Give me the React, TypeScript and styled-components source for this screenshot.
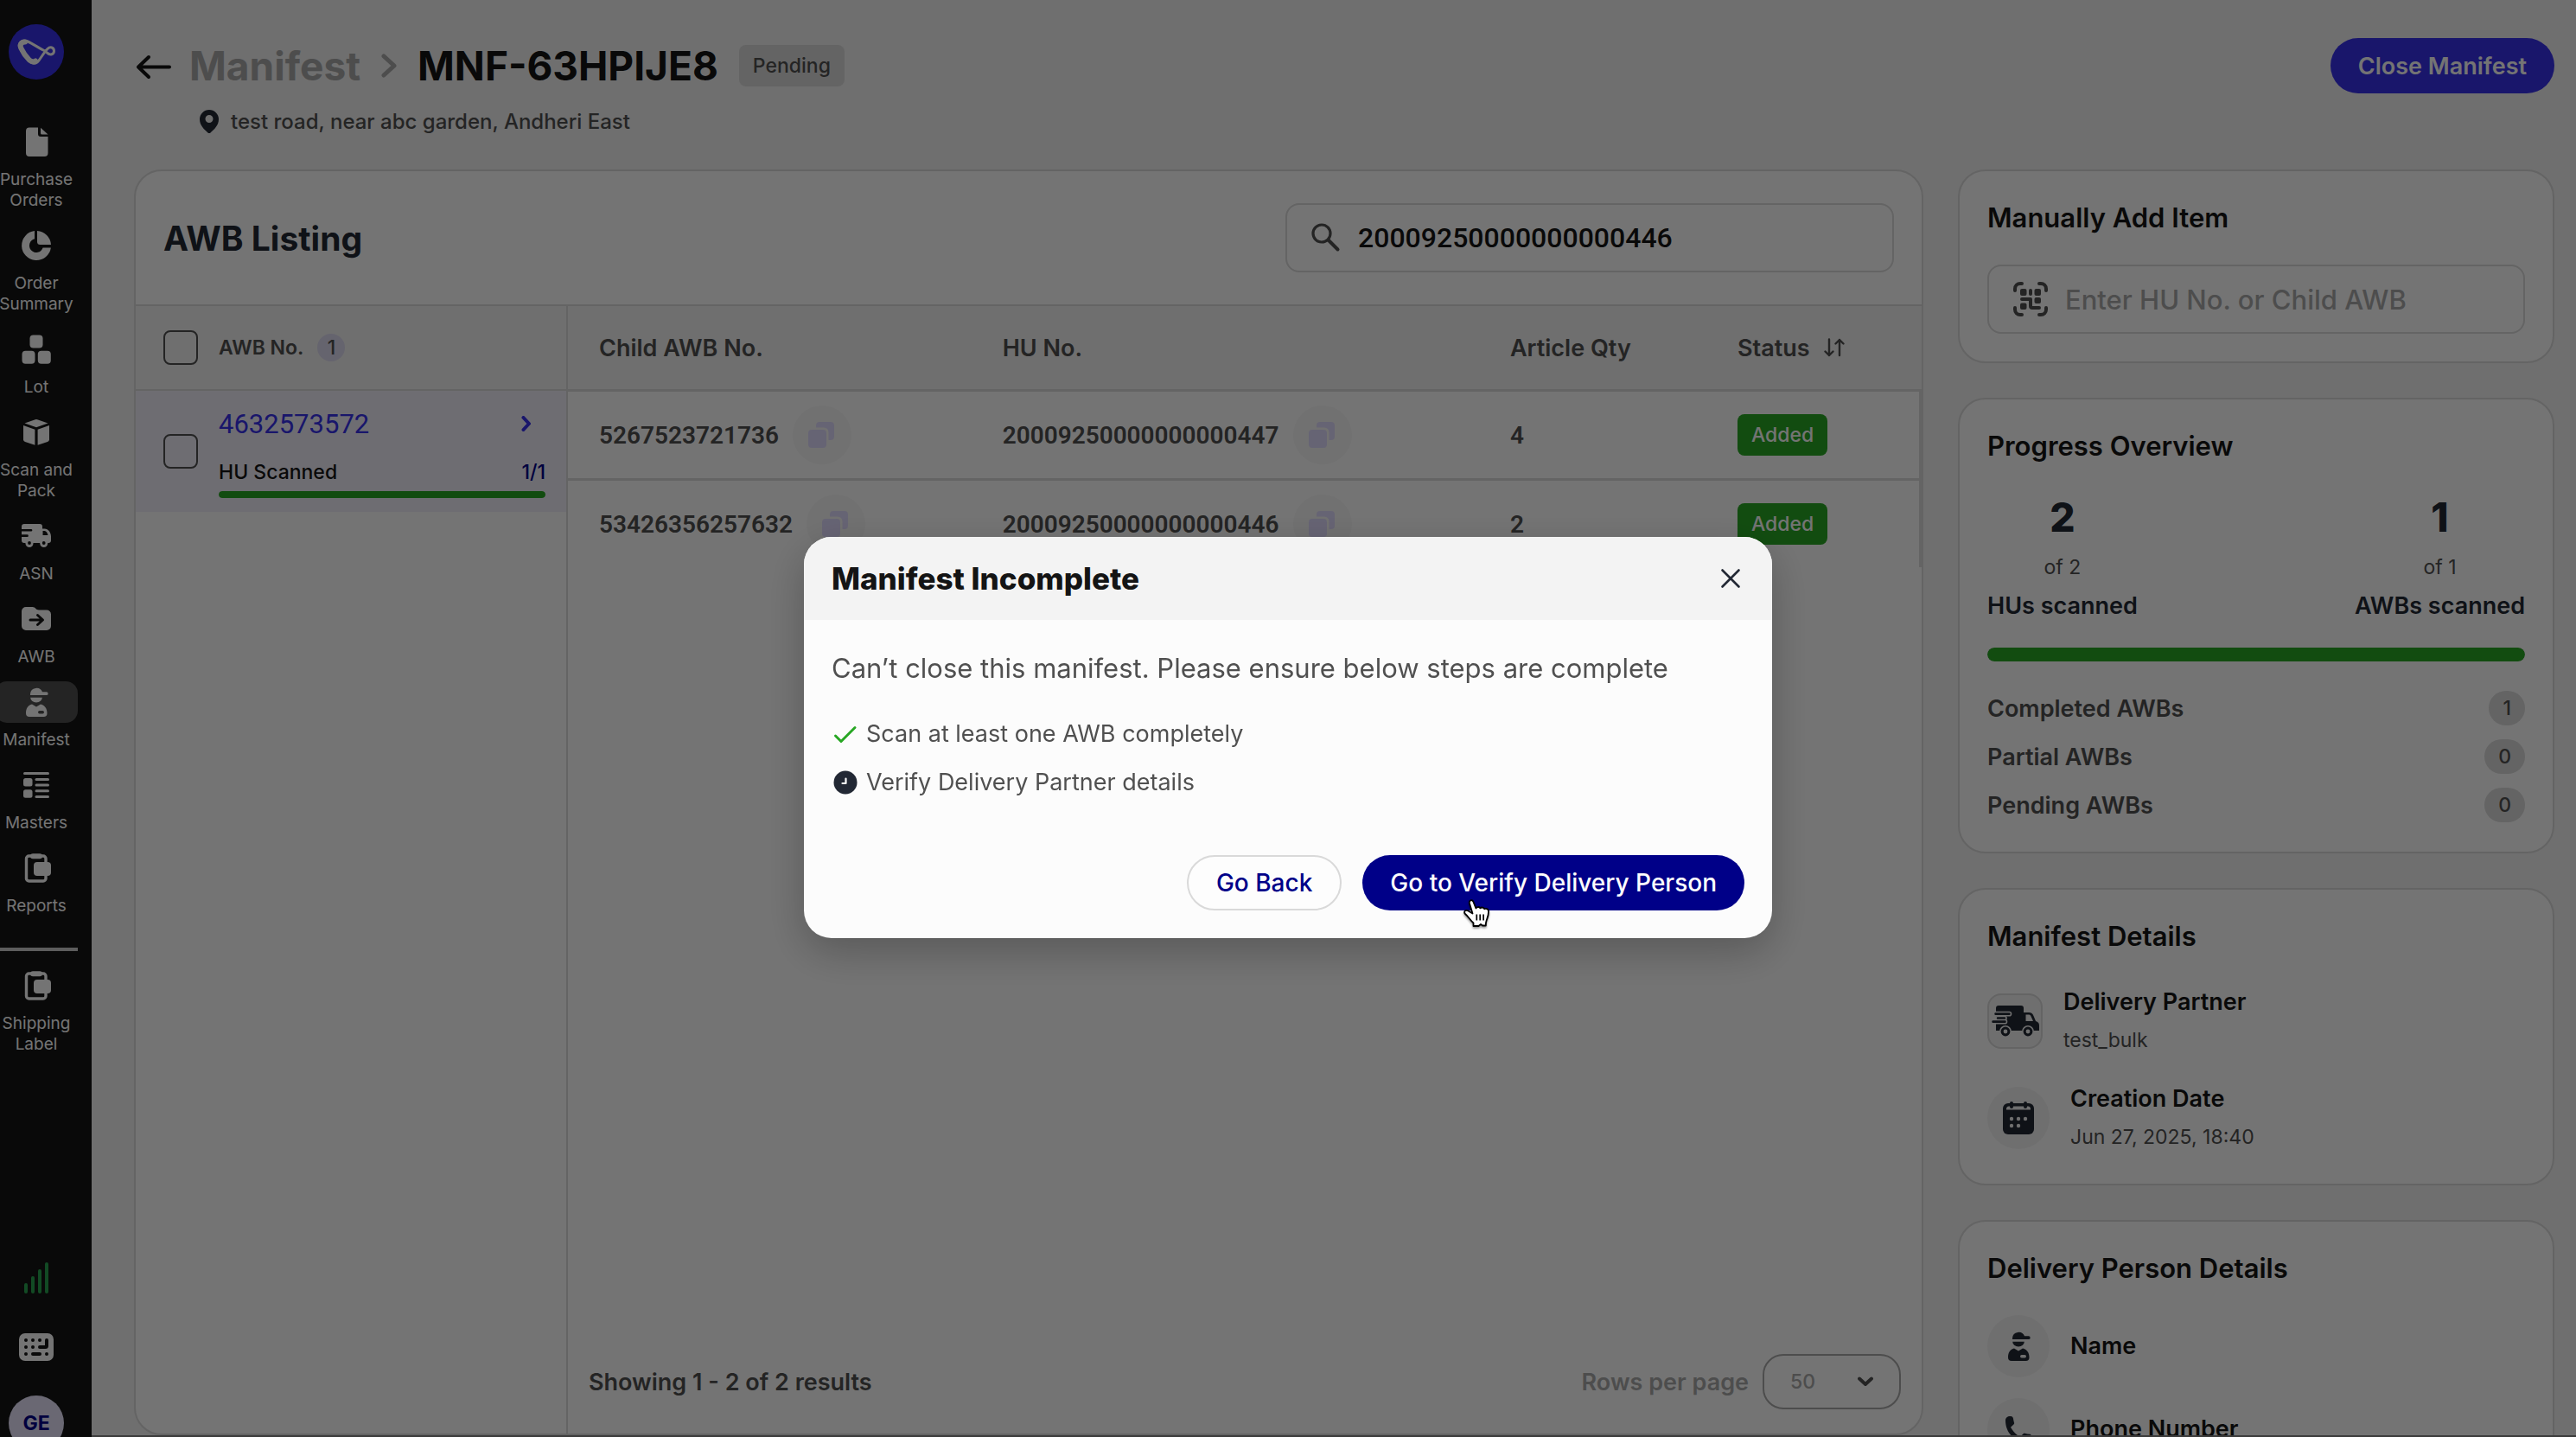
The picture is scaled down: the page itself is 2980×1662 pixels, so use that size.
import React from "react";
import styled, { createGlobalStyle } from "styled-components";

const c = {
  ink: "#141414",
  navy: "#222834",
  text: "#4f4f4f",
  muted: "#a8a8a8",
  line: "#d9d9d9",
  page: "#f1f1f1",
  card: "#fdfdfd",
  primary: "#3830ea",
  deep: "#000088",
  green: "#28a724",
  lavender: "#e6e3fb",
};

const numeric = `Roboto, "Liberation Sans", sans-serif`;

const GlobalStyle = createGlobalStyle`
  *, *::before, *::after { box-sizing: border-box; }
  html, body { margin: 0; height: 100%; overflow: hidden; background: ${c.page}; }
  body { font-family: Inter, "Liberation Sans", sans-serif; color: ${c.ink}; font-size: 27px; }
  h1, h2, h3, p, ul, dl, dd, dt { margin: 0; padding: 0; }
  button, input, select { font: inherit; color: inherit; }
  svg { display: block; flex: none; }
`;

/* ---------- Layout ---------- */

const Shell = styled.div`
  display: flex;
  height: 100vh;
  overflow: hidden;
`;

const Sidebar = styled.aside`
  flex: none;
  width: 106px;
  height: 100vh;
  padding-top: 28px;
  overflow: hidden;
  background: ${c.ink};
  color: ${c.card};
  display: flex;
  flex-direction: column;
`;

const Rail = styled.div`
  flex: 1;
  width: 96px;
  margin-left: -6px;
  display: flex;
  flex-direction: column;
  align-items: center;
`;

const NavList = styled.nav`
  align-self: stretch;
  margin-top: 48px;
  display: flex;
  flex-direction: column;
  gap: 16px;
`;

const NavItem = styled.a`
  display: flex;
  flex-direction: column;
  gap: 8px;
  color: inherit;
  text-align: center;
  text-decoration: none;
  font-size: 19px;
  line-height: 24px;
`;

const NavIcon = styled.span<{ $active?: boolean }>`
  height: 48px;
  border-radius: 14px;
  display: flex;
  align-items: center;
  justify-content: center;
  background: ${(p) => (p.$active ? c.text : "transparent")};
`;

const Divider = styled.hr`
  width: 100%;
  height: 4px;
  margin: 20px 0 0;
  border: 0;
  background: #cacaca;
`;

const RailFooter = styled.div`
  margin-top: auto;
  margin-bottom: -16px;
  display: flex;
  flex-direction: column;
  align-items: center;
  gap: 40px;
`;

const Avatar = styled.div`
  width: 64px;
  height: 64px;
  border-radius: 50%;
  background: ${c.lavender};
  color: ${c.deep};
  display: flex;
  align-items: center;
  justify-content: center;
  font-size: 23px;
  font-weight: 700;
`;

const Main = styled.main`
  flex: 1;
  min-width: 0;
  padding: 44px 25px 0 49px;
  border-bottom: 2px solid #808080;
  display: flex;
  flex-direction: column;
`;

const TopRow = styled.header`
  display: flex;
  align-items: center;
  height: 64px;
`;

const PlainButton = styled.button`
  border: 0;
  padding: 0;
  background: none;
  display: flex;
  cursor: pointer;
`;

const Crumbs = styled.div`
  display: flex;
  align-items: center;
  gap: 24px;
  margin-left: 20px;
  font-size: 46px;
  font-weight: 700;
`;

const CrumbLink = styled.a`
  color: ${c.muted};
  text-decoration: none;
`;

const Title = styled.h1`
  font-size: inherit;
  font-weight: 700;
`;

const Tag = styled.span<{ $tone: "grey" | "green" }>`
  display: inline-flex;
  align-items: center;
  height: 48px;
  padding: 0 16px;
  border-radius: 8px;
  font-size: 23px;
  font-weight: 500;
  background: ${(p) => (p.$tone === "green" ? c.green : "#dadada")};
  color: ${(p) => (p.$tone === "green" ? c.card : c.text)};
`;

const Button = styled.button<{ $kind: "primary" | "active" | "outline" }>`
  position: relative;
  height: 64px;
  padding: 0 32px;
  border-radius: 32px;
  font-size: ${(p) => (p.$kind === "primary" ? 27 : 28)}px;
  font-weight: ${(p) => (p.$kind === "primary" ? 600 : 500)};
  white-space: nowrap;
  cursor: pointer;
  border: ${(p) => (p.$kind === "outline" ? `2px solid ${c.line}` : "0")};
  background: ${(p) => (p.$kind === "primary" ? c.primary : p.$kind === "active" ? c.deep : c.card)};
  color: ${(p) => (p.$kind === "outline" ? c.deep : c.card)};
`;

const Spacer = styled.div`
  flex: 1;
`;

const Address = styled.p`
  display: flex;
  align-items: center;
  gap: 14px;
  height: 32px;
  margin: 16px 0 40px 76px;
  font-size: 24px;
  font-weight: 500;
  color: ${c.text};
`;

const Columns = styled.div`
  flex: 1;
  min-height: 0;
  display: grid;
  grid-template-columns: minmax(0, 3fr) minmax(0, 1fr);
  gap: 40px;
`;

const Panel = styled.section`
  border: 2px solid ${c.line};
  border-radius: 32px;
  background: ${c.card};
`;

/* ---------- Listing ---------- */

const Listing = styled(Panel)`
  overflow: hidden;
  display: flex;
  flex-direction: column;
`;

const ListingHead = styled.div`
  display: flex;
  align-items: center;
  justify-content: space-between;
  height: 156px;
  padding: 0 32px;
  border-bottom: 2px solid ${c.line};
`;

const ListingTitle = styled.h2`
  font-size: 39px;
  font-weight: 700;
  color: ${c.navy};
`;

const Field = styled.label<{ $width: string }>`
  display: flex;
  align-items: center;
  gap: 20px;
  width: ${(p) => p.$width};
  height: 80px;
  padding: 0 28px;
  border: 2px solid ${c.line};
  border-radius: 16px;
  color: ${c.text};
`;

const FieldInput = styled.input<{ $numeric?: boolean }>`
  flex: 1;
  min-width: 0;
  border: 0;
  padding: 0;
  outline: 0;
  background: none;
  color: ${c.ink};
  font-family: ${(p) => (p.$numeric ? numeric : "inherit")};
  font-size: ${(p) => (p.$numeric ? 32 : 31)}px;
  font-weight: 500;
  &::placeholder { color: ${c.muted}; opacity: 1; }
`;

const ListingBody = styled.div`
  flex: 1;
  min-height: 0;
  display: flex;
`;

const AwbColumn = styled.div`
  flex: none;
  width: 500px;
  border-right: 2px solid ${c.line};
`;

const AwbHead = styled.div`
  display: flex;
  align-items: center;
  height: 98px;
  padding: 0 24px 0 32px;
  background: ${c.page};
  border-bottom: 2px solid ${c.line};
  font-size: 23px;
  font-weight: 600;
  color: ${c.text};
`;

const Checkbox = styled.input`
  appearance: none;
  flex: none;
  width: 40px;
  height: 40px;
  margin: 0 24px 0 0;
  border: 2px solid ${c.text};
  border-radius: 8px;
`;

const CountDot = styled.span`
  display: flex;
  align-items: center;
  justify-content: center;
  width: 32px;
  height: 32px;
  margin-left: 16px;
  border-radius: 50%;
  background: #dddaf0;
  font-weight: 500;
`;

const AwbRow = styled.div`
  display: flex;
  align-items: center;
  height: 140px;
  padding: 0 24px 0 32px;
  background: #efeef9;
`;

const AwbInfo = styled.div`
  flex: 1;
`;

const Between = styled.div`
  display: flex;
  align-items: center;
  justify-content: space-between;
`;

const AwbLink = styled.a`
  display: flex;
  align-items: center;
  justify-content: space-between;
  height: 44px;
  padding-right: 16px;
  color: ${c.primary};
  font-family: ${numeric};
  font-size: 31px;
  font-weight: 400;
  text-decoration: none;
`;

const ScanLine = styled(Between)`
  height: 32px;
  margin: 18px 0 6px;
  font-size: 23px;
  font-weight: 500;
`;

const ScanCount = styled.span`
  color: ${c.deep};
`;

const Track = styled.div<{ $h: number }>`
  height: ${(p) => p.$h}px;
  border-radius: 8px;
  background: ${c.line};
  overflow: hidden;
`;

const Fill = styled.div`
  height: 100%;
  border-radius: 8px;
  background: ${c.green};
`;

const ItemsColumn = styled.div`
  flex: 1;
  min-width: 0;
  display: flex;
  flex-direction: column;
`;

const Table = styled.table`
  width: 100%;
  table-layout: fixed;
  border-collapse: separate;
  border-spacing: 0;
  color: ${c.text};
  font-size: 27px;
  font-weight: 600;
`;

const Th = styled.th<{ $w?: string }>`
  width: ${(p) => p.$w ?? "auto"};
  height: 99px;
  padding: 0 0 0 36px;
  text-align: left;
  font-weight: 600;
  background: ${c.page};
  border-bottom: 3px solid ${c.line};
`;

const ItemRow = styled.tr`
  font-family: ${numeric};
  font-size: 28px;
  td {
    height: 103px;
    padding: 0 0 0 36px;
    border-bottom: 3px solid ${c.line};
  }
  td:last-child {
    border-right: 3px solid ${c.line};
    font-family: Inter, "Liberation Sans", sans-serif;
  }
  &:last-child td { border-bottom: 0; height: 100px; }
`;

const Inline = styled.span`
  display: flex;
  align-items: center;
  gap: 16px;
`;

const CopyButton = styled(PlainButton)`
  width: 68px;
  height: 68px;
  border-radius: 50%;
  align-items: center;
  justify-content: center;
  background: #f6f6f6;
  color: #dfdafc;
`;

const ListingFoot = styled.div`
  display: flex;
  align-items: center;
  justify-content: space-between;
  margin-top: auto;
  padding: 0 24px 28px 24px;
  font-weight: 600;
  color: ${c.text};
`;

const PageSize = styled.label`
  display: flex;
  align-items: center;
  gap: 16px;
  color: ${c.muted};
`;

const SelectBox = styled.span`
  position: relative;
  display: flex;
  color: ${c.text};
  svg {
    position: absolute;
    right: 32px;
    top: 26px;
    pointer-events: none;
  }
`;

const Select = styled.select`
  appearance: none;
  width: 160px;
  height: 64px;
  padding: 0 30px;
  border: 2px solid ${c.muted};
  border-radius: 24px;
  background: none;
  color: ${c.muted};
  font-size: 23px;
  font-weight: 500;
`;

/* ---------- Right column ---------- */

const Side = styled.div`
  display: flex;
  flex-direction: column;
  gap: 40px;
  min-height: 0;
  overflow: hidden;
`;

const SideCard = styled(Panel)`
  flex: none;
  padding: 32px;
`;

const CardTitle = styled.h2`
  margin-bottom: 32px;
  font-size: 31px;
  line-height: 44px;
  font-weight: 600;
`;

const Stats = styled(Between)`
  margin-bottom: 28px;
  color: ${c.navy};
`;

const Stat = styled.div`
  display: flex;
  flex-direction: column;
  align-items: center;
  font-weight: 600;
  line-height: 40px;
`;

const StatValue = styled.strong`
  font-size: 46px;
  line-height: 56px;
  font-weight: 800;
`;

const StatOf = styled.span`
  margin: 10px 0 5px;
  font-size: 23px;
  font-weight: 400;
  color: ${c.text};
`;

const Counts = styled.dl`
  display: flex;
  flex-direction: column;
  gap: 16px;
  margin-top: 34px;
  padding-bottom: 2px;
  font-weight: 600;
  color: ${c.text};
`;

const Pill = styled.dd`
  height: 40px;
  padding: 0 16px;
  border-radius: 20px;
  background: #dadada;
  font-size: 23px;
  line-height: 40px;
  font-weight: 500;
`;

const Details = styled.div`
  display: flex;
  flex-direction: column;
  gap: 24px;
`;

const Detail = styled.div`
  display: flex;
  align-items: center;
  gap: 24px;
`;

const Disc = styled.span<{ $square?: boolean }>`
  flex: none;
  display: flex;
  align-items: center;
  justify-content: center;
  width: ${(p) => (p.$square ? 64 : 72)}px;
  height: ${(p) => (p.$square ? 64 : 72)}px;
  border: ${(p) => (p.$square ? `2px solid ${c.line}` : "0")};
  border-radius: ${(p) => (p.$square ? "16px" : "50%")};
  background: ${c.page};
  color: ${c.navy};
`;

const DetailLabel = styled.h3`
  font-size: 27px;
  line-height: 44px;
  font-weight: 600;
`;

const DetailValue = styled.p`
  font-size: 23px;
  line-height: 44px;
  color: ${c.text};
`;

/* ---------- Modal ---------- */

const Overlay = styled.div`
  position: fixed;
  inset: 0;
  padding-top: 44px;
  display: flex;
  align-items: center;
  justify-content: center;
  background: rgba(0, 0, 0, 0.54);
`;

const Modal = styled.div`
  width: 1120px;
  border-radius: 32px;
  background: #fcfcfc;
  box-shadow: 0 16px 48px rgba(0, 0, 0, 0.24);
`;

const ModalHead = styled(Between)`
  height: 96px;
  padding: 0 32px;
  border-radius: 32px 32px 0 0;
  background: #f3f3f3;
  color: ${c.navy};
`;

const ModalTitle = styled.h2`
  color: ${c.ink};
  font-size: 35px;
  font-weight: 800;
`;

const ModalBody = styled.div`
  padding: 32px;
  color: #505050;
`;

const ModalLead = styled.p`
  font-size: 31px;
  line-height: 48px;
`;

const Steps = styled.ul`
  display: flex;
  flex-direction: column;
  gap: 16px;
  margin: 32px 0 64px;
  list-style: none;
  line-height: 40px;
`;

const Step = styled.li`
  display: flex;
  align-items: center;
  gap: 8px;
`;

const Actions = styled.div`
  display: flex;
  justify-content: flex-end;
  gap: 24px;
`;

const Pointer = styled.svg`
  position: absolute;
  left: 116px;
  top: 50px;
  filter: drop-shadow(0 2px 1px rgba(0, 0, 0, 0.4));
`;

/* ---------- Icons ---------- */

type IconProps = { size?: number; children: React.ReactNode };
const Icon = ({ size = 40, children }: IconProps) => (
  <svg width={size} height={size} viewBox="0 0 40 40" fill="currentColor" aria-hidden="true">
    {children}
  </svg>
);

const Logo = () => (
  <svg width="64" height="64" viewBox="0 0 64 64" fill="none" aria-hidden="true">
    <circle cx="32" cy="32" r="32" fill={c.primary} />
    <g stroke="#fdfdfd" strokeLinejoin="round" strokeLinecap="round">
      <path
        strokeWidth="3"
        d="M41 30.5C34 27 28 22.5 21 19.500C15 17.500 10.500 22 13 27.500C16 34 19 38 23.500 42.500C28 46.500 32 46 34.500 42.500C38 38 41 32.500 45 28.500C48 25.500 52.500 26.500 52.500 31C52.500 35 48 36 45 33.500C43.500 32 42.500 31.300 41 30.500Z"
      />
      <path strokeWidth="6" d="M19 20.500C14.500 20.500 12.500 24 14.500 28C17 33.500 20 37.500 24 41.500C26.500 43.600 29 43.800 31 42.500" />
    </g>
  </svg>
);

const DocIcon = () => (
  <Icon>
    <path d="M12 3.500H22V11a3 3 0 0 0 3 3H33.500V33a4 4 0 0 1-4 4H12a4 4 0 0 1-4-4V7.500a4 4 0 0 1 4-4Z" />
    <path d="M25 3.800 33.500 11.500H26.500A1.500 1.500 0 0 1 25 10Z" />
  </Icon>
);

const PieIcon = () => (
  <Icon>
    <path d="M18 3.100A17 17 0 1 0 36.900 22.500H27.600A8 8 0 1 1 18 12.300Z" />
    <path d="M21 3A17 17 0 0 1 37 19H24.500A3.500 3.500 0 0 1 21 15.500Z" />
  </Icon>
);

const LotIcon = () => (
  <Icon>
    <rect x="12.500" y="3.500" width="15" height="15" rx="4" />
    <rect x="3.500" y="21.800" width="15" height="15" rx="4" />
    <rect x="21.800" y="21.800" width="15" height="15" rx="4" />
  </Icon>
);

const BoxIcon = () => (
  <Icon>
    <path d="M6.500 9.500 18.800 5.300a4 4 0 0 1 2.400 0L33.500 9.500 20 14.300Z" />
    <path d="M5 12 18.400 16.800V34.700L7 31a3 3 0 0 1-2-2.800Z" />
    <path d="M35 12 21.600 16.800V34.700L33 31a3 3 0 0 0 2-2.800Z" />
  </Icon>
);

const AsnIcon = () => (
  <Icon>
    <path
      fillRule="evenodd"
      d="M3 9a3 3 0 0 1 3-3H24a3 3 0 0 1 3 3V11.500H29.500C34 11.500 37 16 37 20.500V25a3 3 0 0 1-3 3H6a3 3 0 0 1-3-3V21H9.500a1.300 1.300 0 0 0 0-2.700H3V14.600H14a1.300 1.300 0 0 0 0-2.700H3ZM27.500 14V19H33.500C33 16.500 31.500 14 29.500 14Z"
    />
    <circle cx="12" cy="28.500" r="4.500" />
    <circle cx="28.700" cy="28.500" r="4.500" />
    <circle cx="12" cy="28" r="1.900" fill="#141414" />
    <circle cx="28.700" cy="28" r="1.900" fill="#141414" />
  </Icon>
);

const FolderIcon = () => (
  <Icon>
    <path d="M3 11a5 5 0 0 1 5-5H15.500C19 6 19.500 9.500 23 9.500H32a5 5 0 0 1 5 5V28a5 5 0 0 1-5 5H8a5 5 0 0 1-5-5Z" />
    <path
      d="M13 21H27M21.500 15.500 27.500 21 21.500 26.500"
      fill="none"
      stroke="#141414"
      strokeWidth="3"
      strokeLinecap="round"
      strokeLinejoin="round"
    />
  </Icon>
);

const CourierIcon = ({ notch = "#4f4f4f" }: { notch?: string }) => (
  <Icon>
    <path d="M13 12V10.500A7.300 7.300 0 0 1 27 8.300H31.800a1.800 1.800 0 0 1 0 3.700Z" />
    <path d="M13.200 14.800H26.800A6.800 5.600 0 0 1 13.200 14.800Z" />
    <path d="M8 33C8 27 10.500 23.500 15 22.500L20 25.500 25 22.500C29.500 23.500 32.500 27 32.500 33A4 4 0 0 1 28.500 37H12A4 4 0 0 1 8 33Z" />
    <rect x="22" y="30" width="7" height="3.500" rx="1.700" fill={notch} />
  </Icon>
);

const MastersIcon = () => (
  <Icon>
    <rect x="5" y="5" width="30" height="3" rx="1.500" />
    <rect x="5" y="12" width="10.500" height="9.500" rx="2.500" />
    <rect x="5" y="25.300" width="10.500" height="9.500" rx="2.500" />
    <rect x="18.500" y="12" width="16.500" height="3" rx="1.500" />
    <rect x="18.500" y="18.500" width="16.500" height="3" rx="1.500" />
    <rect x="18.500" y="25.300" width="16.500" height="3" rx="1.500" />
    <rect x="18.500" y="32" width="16.500" height="3" rx="1.500" />
  </Icon>
);

const ReportIcon = () => (
  <Icon>
    <path
      d="M15 6H11.500A3 3 0 0 0 8.500 9V32A3 3 0 0 0 11.500 35H28A3 3 0 0 0 31 32V9A3 3 0 0 0 28 6H25"
      fill="none"
      stroke="currentColor"
      strokeWidth="3.400"
    />
    <rect x="13" y="3.300" width="14" height="6" rx="3" />
    <rect x="17" y="13" width="20" height="16" rx="4" />
  </Icon>
);

const SignalIcon = () => (
  <svg width="28" height="48" viewBox="0 -6 28 48" fill="#28a24f" aria-hidden="true">
    <rect x="0" y="24" width="4" height="12" rx="2" />
    <rect x="8" y="16" width="4" height="20" rx="2" />
    <rect x="16" y="8" width="4" height="28" rx="2" />
    <rect x="24" y="0" width="4" height="36" rx="2" />
  </svg>
);

const KeyboardIcon = () => (
  <svg width="40" height="32" viewBox="0 0 40 32" fill="#141414" aria-hidden="true">
    <rect width="40" height="32" rx="7" fill="#fdfdfd" />
    {[[6, 6], [14, 6], [22, 6], [6, 14], [14, 14], [6, 22], [30, 22]].map(([x, y]) => (
      <rect key={`${x}-${y}`} x={x} y={y} width="4" height="4" rx="2" />
    ))}
    <rect x="14" y="22" width="12" height="4" rx="2" />
    <path d="M32 8V14.500A1.500 1.500 0 0 1 30.500 16H24" fill="none" stroke="#141414" strokeWidth="4" strokeLinecap="round" />
  </svg>
);

const stroke = { fill: "none", stroke: "currentColor", strokeLinecap: "round", strokeLinejoin: "round" } as const;

const BackIcon = () => (
  <svg width="44" height="32" viewBox="0 0 44 32" aria-hidden="true">
    <path d="M41 17.500H5M17 6 5 17.500 17 29" strokeWidth="4" {...stroke} />
  </svg>
);

const CrumbIcon = () => (
  <svg width="18" height="28" viewBox="0 0 18 28" color={c.muted} aria-hidden="true">
    <path d="M3 3 15 14 3 25" strokeWidth="5" {...stroke} />
  </svg>
);

const PinIcon = () => (
  <svg width="22" height="27" viewBox="0 0 22 27" fill={c.navy} aria-hidden="true">
    <path
      fillRule="evenodd"
      d="M11 0A11 11 0 0 0 0 11C0 18 5.500 23 9.500 26.400A2.300 2.300 0 0 0 12.500 26.400C16.500 23 22 18 22 11A11 11 0 0 0 11 0ZM11 15A4.500 4.500 0 1 1 11 6 4.500 4.500 0 0 1 11 15Z"
    />
  </svg>
);

const SearchIcon = () => (
  <svg width="34" height="34" viewBox="0 0 34 34" aria-hidden="true">
    <circle cx="12" cy="12" r="10" strokeWidth="3.200" {...stroke} />
    <path d="M20 20 30.500 30.500" strokeWidth="4" {...stroke} />
  </svg>
);

const ChevronRight = () => (
  <svg width="12" height="18" viewBox="0 0 12 18" aria-hidden="true">
    <path d="M2.500 2 9 9 2.500 16" strokeWidth="4" {...stroke} />
  </svg>
);

const ChevronDown = () => (
  <svg width="18" height="12" viewBox="0 0 18 12" aria-hidden="true">
    <path d="M2 2.500 9 9 16 2.500" strokeWidth="4" {...stroke} />
  </svg>
);

const SortIcon = () => (
  <svg width="24" height="22" viewBox="0 0 24 22" aria-hidden="true">
    <path d="M6 1.500V20M1.500 15.500 6 20 10.500 15.500M18 20V2M13.500 6.500 18 2 22.500 6.500" strokeWidth="2.400" {...stroke} />
  </svg>
);

const CopyIcon = () => (
  <Icon>
    <path d="M17 5H30a4 4 0 0 1 4 4V22a4 4 0 0 1-4 4H27.500V17A5.500 5.500 0 0 0 22 11.500H13V9a4 4 0 0 1 4-4Z" />
    <rect x="4" y="14" width="21" height="21" rx="4" />
  </Icon>
);

const QrIcon = () => (
  <Icon>
    <path
      d="M2 10V8A6 6 0 0 1 8 2H10M30 2H32A6 6 0 0 1 38 8V10M38 30V32A6 6 0 0 1 32 38H30M10 38H8A6 6 0 0 1 2 32V30"
      strokeWidth="4"
      {...stroke}
    />
    <rect x="8" y="8" width="7.500" height="8" rx="2" />
    <rect x="18" y="8" width="4" height="8" rx="2" />
    <rect x="24.500" y="8" width="7.500" height="8" rx="2" />
    <rect x="24.500" y="18" width="7.500" height="7" rx="2" />
    <rect x="8" y="24.500" width="7.500" height="7.500" rx="2" />
    <path d="M10 20H20V28A2 2 0 0 0 22 30H30" strokeWidth="4" {...stroke} />
  </Icon>
);

const TruckIcon = () => (
  <svg width="56" height="36" viewBox="0 0 56 36" fill="currentColor" aria-hidden="true">
    <path d="M9 0H35A3 3 0 0 1 38 3V29H6V3A3 3 0 0 1 9 0Z" />
    <path
      fillRule="evenodd"
      d="M38 8H44C47 8 48.500 9.500 49.500 12L52 18C54.500 19 56 20 56 23V29H38ZM40.500 10.500V18H49L46.500 12.500C46 11 45 10.500 43.500 10.500Z"
    />
    <g stroke={c.page} strokeWidth="1.600">
      <circle cx="17" cy="30" r="6.200" />
      <circle cx="43" cy="30" r="6.200" />
      <rect x="3.500" y="7.500" width="20" height="4.200" rx="2" />
      <rect x="6" y="12.500" width="12" height="4.200" rx="2" />
      <rect x="0.500" y="16.500" width="18" height="4.200" rx="2" />
    </g>
    <circle cx="17" cy="30" r="2.400" fill={c.page} />
    <circle cx="43" cy="30" r="2.400" fill={c.page} />
  </svg>
);

const CalendarIcon = () => (
  <svg width="36" height="38" viewBox="0 0 36 38" fill="currentColor" aria-hidden="true">
    <rect y="2" width="36" height="36" rx="6" />
    <path d="M4 9A3 3 0 0 1 7 5.500H29A3 3 0 0 1 32 9V9.500H4Z" fill={c.page} />
    <rect x="8" y="0" width="4" height="8" rx="2" />
    <rect x="24" y="0" width="4" height="8" rx="2" />
    {[[10, 20], [18, 20], [26, 20], [10, 28], [18, 28]].map(([x, y]) => (
      <circle key={`${x}-${y}`} cx={x} cy={y} r="2.200" fill={c.page} />
    ))}
  </svg>
);

const PhoneIcon = () => (
  <svg width="40" height="40" viewBox="0 0 24 24" fill="currentColor" aria-hidden="true">
    <path d="M20 15.500c-1.200 0-2.400-.2-3.600-.6-.4-.1-.8 0-1 .2l-2.200 2.200c-2.800-1.400-5.100-3.800-6.600-6.600l2.200-2.200c.3-.3.400-.7.200-1C8.700 6.400 8.500 5.200 8.300 4.200 8 3.200 7 3 6 3 4.500 3 3 4 3 6c0 8.500 6.500 15 15 15 2 0 3-1.500 3-3 0-1.300-.3-2.500-1-2.500Z" />
  </svg>
);

const CloseIcon = () => (
  <svg width="32" height="24" viewBox="0 0 32 24" aria-hidden="true">
    <path d="M6.500 2.500 25.500 21.500M25.500 2.500 6.500 21.500" strokeWidth="2.600" {...stroke} />
  </svg>
);

const CheckIcon = () => (
  <svg width="32" height="32" viewBox="0 0 32 32" color={c.green} aria-hidden="true">
    <path d="M4.500 18 11 24.500 27 8.500" strokeWidth="3" {...stroke} />
  </svg>
);

const ClockIcon = () => (
  <svg width="32" height="32" viewBox="0 0 32 32" aria-hidden="true">
    <circle cx="16" cy="16" r="13.500" fill={c.navy} />
    <path d="M16.500 11.500V17H12.500" stroke="#fcfcfc" strokeWidth="2.200" fill="none" strokeLinecap="round" strokeLinejoin="round" />
  </svg>
);

const HandPointer = () => (
  <Pointer width="32" height="34" viewBox="0 0 32 34" aria-hidden="true">
    <path
      d="M11.500 17.500 8 6C7 2.200 11 .6 12.400 4L15.400 11.500C16.400 9.600 19.600 9.500 20.400 11.400 21.800 9.900 24.600 10.300 25.200 12.300 26.800 11.300 29.800 12 30 14.500 30.200 19.500 29 22 27.800 25 26.800 27.500 26.800 29.500 26.800 31.500H23L21 30 18.500 32H12.500V28.500C9 25.500 6.500 21 3 18 .5 15.500 3.500 12.800 6.500 14.500Z"
      fill="#fff"
      stroke="#000"
      strokeWidth="1.800"
      strokeLinejoin="round"
    />
    <path d="M16.300 18.500V25.500M20.200 18.500V25.500M24.100 18.500V25.500" stroke="#000" strokeWidth="1.700" />
  </Pointer>
);

/* ---------- Data ---------- */

const navItems = [
  { label: "Purchase Orders", icon: <DocIcon /> },
  { label: "Order Summary", icon: <PieIcon /> },
  { label: "Lot", icon: <LotIcon /> },
  { label: "Scan and Pack", icon: <BoxIcon /> },
  { label: "ASN", icon: <AsnIcon /> },
  { label: "AWB", icon: <FolderIcon /> },
  { label: "Manifest", icon: <CourierIcon />, active: true },
  { label: "Masters", icon: <MastersIcon /> },
  { label: "Reports", icon: <ReportIcon /> },
];

const items = [
  { child: "5267523721736", hu: "20009250000000000447", qty: 4, status: "Added" },
  { child: "53426356257632", hu: "20009250000000000446", qty: 2, status: "Added" },
];

const counts = [
  { label: "Completed AWBs", value: 1 },
  { label: "Partial AWBs", value: 0 },
  { label: "Pending AWBs", value: 0 },
];

const stats = [
  { value: 2, total: 2, label: "HUs scanned" },
  { value: 1, total: 1, label: "AWBs scanned" },
];

/* ---------- Page ---------- */

const Nav = () => (
  <Sidebar>
    <Rail>
      <Logo />
      <NavList>
        {navItems.map((item) => (
          <NavItem key={item.label} href="#">
            <NavIcon $active={item.active}>{item.icon}</NavIcon>
            {item.label}
          </NavItem>
        ))}
        <Divider />
        <NavItem href="#">
          <NavIcon>
            <ReportIcon />
          </NavIcon>
          Shipping Label
        </NavItem>
      </NavList>
      <RailFooter>
        <SignalIcon />
        <KeyboardIcon />
        <Avatar>GE</Avatar>
      </RailFooter>
    </Rail>
  </Sidebar>
);

const CopyCell = ({ value }: { value: string }) => (
  <Inline>
    {value}
    <CopyButton aria-label={`Copy ${value}`}>
      <CopyIcon />
    </CopyButton>
  </Inline>
);

const AwbListing = () => (
  <Listing>
    <ListingHead>
      <ListingTitle>AWB Listing</ListingTitle>
      <Field $width="704px">
        <SearchIcon />
        <FieldInput $numeric aria-label="Search" defaultValue="20009250000000000446" />
      </Field>
    </ListingHead>
    <ListingBody>
      <AwbColumn>
        <AwbHead>
          <Checkbox type="checkbox" id="all-awbs" />
          <label htmlFor="all-awbs">AWB No.</label>
          <CountDot>1</CountDot>
        </AwbHead>
        <AwbRow>
          <Checkbox type="checkbox" aria-label="4632573572" />
          <AwbInfo>
            <AwbLink href="#">
              4632573572
              <ChevronRight />
            </AwbLink>
            <ScanLine>
              <span>HU Scanned</span>
              <ScanCount>1/1</ScanCount>
            </ScanLine>
            <Track $h={8}>
              <Fill />
            </Track>
          </AwbInfo>
        </AwbRow>
      </AwbColumn>
      <ItemsColumn>
        <Table>
          <thead>
            <tr>
              <Th $w="29.8%">Child AWB No.</Th>
              <Th $w="37.5%">HU No.</Th>
              <Th $w="16.8%">Article Qty</Th>
              <Th>
                <Inline>
                  Status <SortIcon />
                </Inline>
              </Th>
            </tr>
          </thead>
          <tbody>
            {items.map((item) => (
              <ItemRow key={item.child}>
                <td>
                  <CopyCell value={item.child} />
                </td>
                <td>
                  <CopyCell value={item.hu} />
                </td>
                <td>{item.qty}</td>
                <td>
                  <Tag $tone="green">{item.status}</Tag>
                </td>
              </ItemRow>
            ))}
          </tbody>
        </Table>
        <ListingFoot>
          <span>Showing 1 - 2 of 2 results</span>
          <PageSize>
            Rows per page
            <SelectBox>
              <Select defaultValue="50">
                <option>50</option>
              </Select>
              <ChevronDown />
            </SelectBox>
          </PageSize>
        </ListingFoot>
      </ItemsColumn>
    </ListingBody>
  </Listing>
);

const SideColumn = () => (
  <Side>
    <SideCard>
      <CardTitle>Manually Add Item</CardTitle>
      <Field $width="100%">
        <QrIcon />
        <FieldInput aria-label="HU No. or Child AWB" placeholder="Enter HU No. or Child AWB" />
      </Field>
    </SideCard>
    <SideCard>
      <CardTitle>Progress Overview</CardTitle>
      <Stats>
        {stats.map((s) => (
          <Stat key={s.label}>
            <StatValue>{s.value}</StatValue>
            <StatOf>of {s.total}</StatOf>
            {s.label}
          </Stat>
        ))}
      </Stats>
      <Track $h={16}>
        <Fill />
      </Track>
      <Counts>
        {counts.map((row) => (
          <Between key={row.label}>
            <dt>{row.label}</dt>
            <Pill>{row.value}</Pill>
          </Between>
        ))}
      </Counts>
    </SideCard>
    <SideCard>
      <CardTitle>Manifest Details</CardTitle>
      <Details>
        <Detail>
          <Disc $square>
            <TruckIcon />
          </Disc>
          <div>
            <DetailLabel>Delivery Partner</DetailLabel>
            <DetailValue>test_bulk</DetailValue>
          </div>
        </Detail>
        <Detail>
          <Disc>
            <CalendarIcon />
          </Disc>
          <div>
            <DetailLabel>Creation Date</DetailLabel>
            <DetailValue>Jun 27, 2025, 18:40</DetailValue>
          </div>
        </Detail>
      </Details>
    </SideCard>
    <SideCard>
      <CardTitle>Delivery Person Details</CardTitle>
      <Details>
        <Detail>
          <Disc>
            <CourierIcon notch={c.page} />
          </Disc>
          <DetailLabel>Name</DetailLabel>
        </Detail>
        <Detail>
          <Disc>
            <PhoneIcon />
          </Disc>
          <DetailLabel>Phone Number</DetailLabel>
        </Detail>
      </Details>
    </SideCard>
  </Side>
);

const IncompleteModal = () => (
  <Overlay>
    <Modal role="dialog" aria-modal="true" aria-labelledby="modal-title">
      <ModalHead>
        <ModalTitle id="modal-title">Manifest Incomplete</ModalTitle>
        <PlainButton aria-label="Close">
          <CloseIcon />
        </PlainButton>
      </ModalHead>
      <ModalBody>
        <ModalLead>Can’t close this manifest. Please ensure below steps are complete</ModalLead>
        <Steps>
          <Step>
            <CheckIcon />
            Scan at least one AWB completely
          </Step>
          <Step>
            <ClockIcon />
            Verify Delivery Partner details
          </Step>
        </Steps>
        <Actions>
          <Button $kind="outline">Go Back</Button>
          <Button $kind="active">
            Go to Verify Delivery Person
            <HandPointer />
          </Button>
        </Actions>
      </ModalBody>
    </Modal>
  </Overlay>
);

export default function App() {
  return (
    <>
      <GlobalStyle />
      <Shell>
        <Nav />
        <Main>
          <TopRow>
            <PlainButton aria-label="Back">
              <BackIcon />
            </PlainButton>
            <Crumbs>
              <CrumbLink href="#">Manifest</CrumbLink>
              <CrumbIcon />
              <Title>MNF-63HPIJE8</Title>
              <Tag $tone="grey">Pending</Tag>
            </Crumbs>
            <Spacer />
            <Button $kind="primary">Close Manifest</Button>
          </TopRow>
          <Address>
            <PinIcon />
            test road, near abc garden, Andheri East
          </Address>
          <Columns>
            <AwbListing />
            <SideColumn />
          </Columns>
        </Main>
      </Shell>
      <IncompleteModal />
    </>
  );
}
